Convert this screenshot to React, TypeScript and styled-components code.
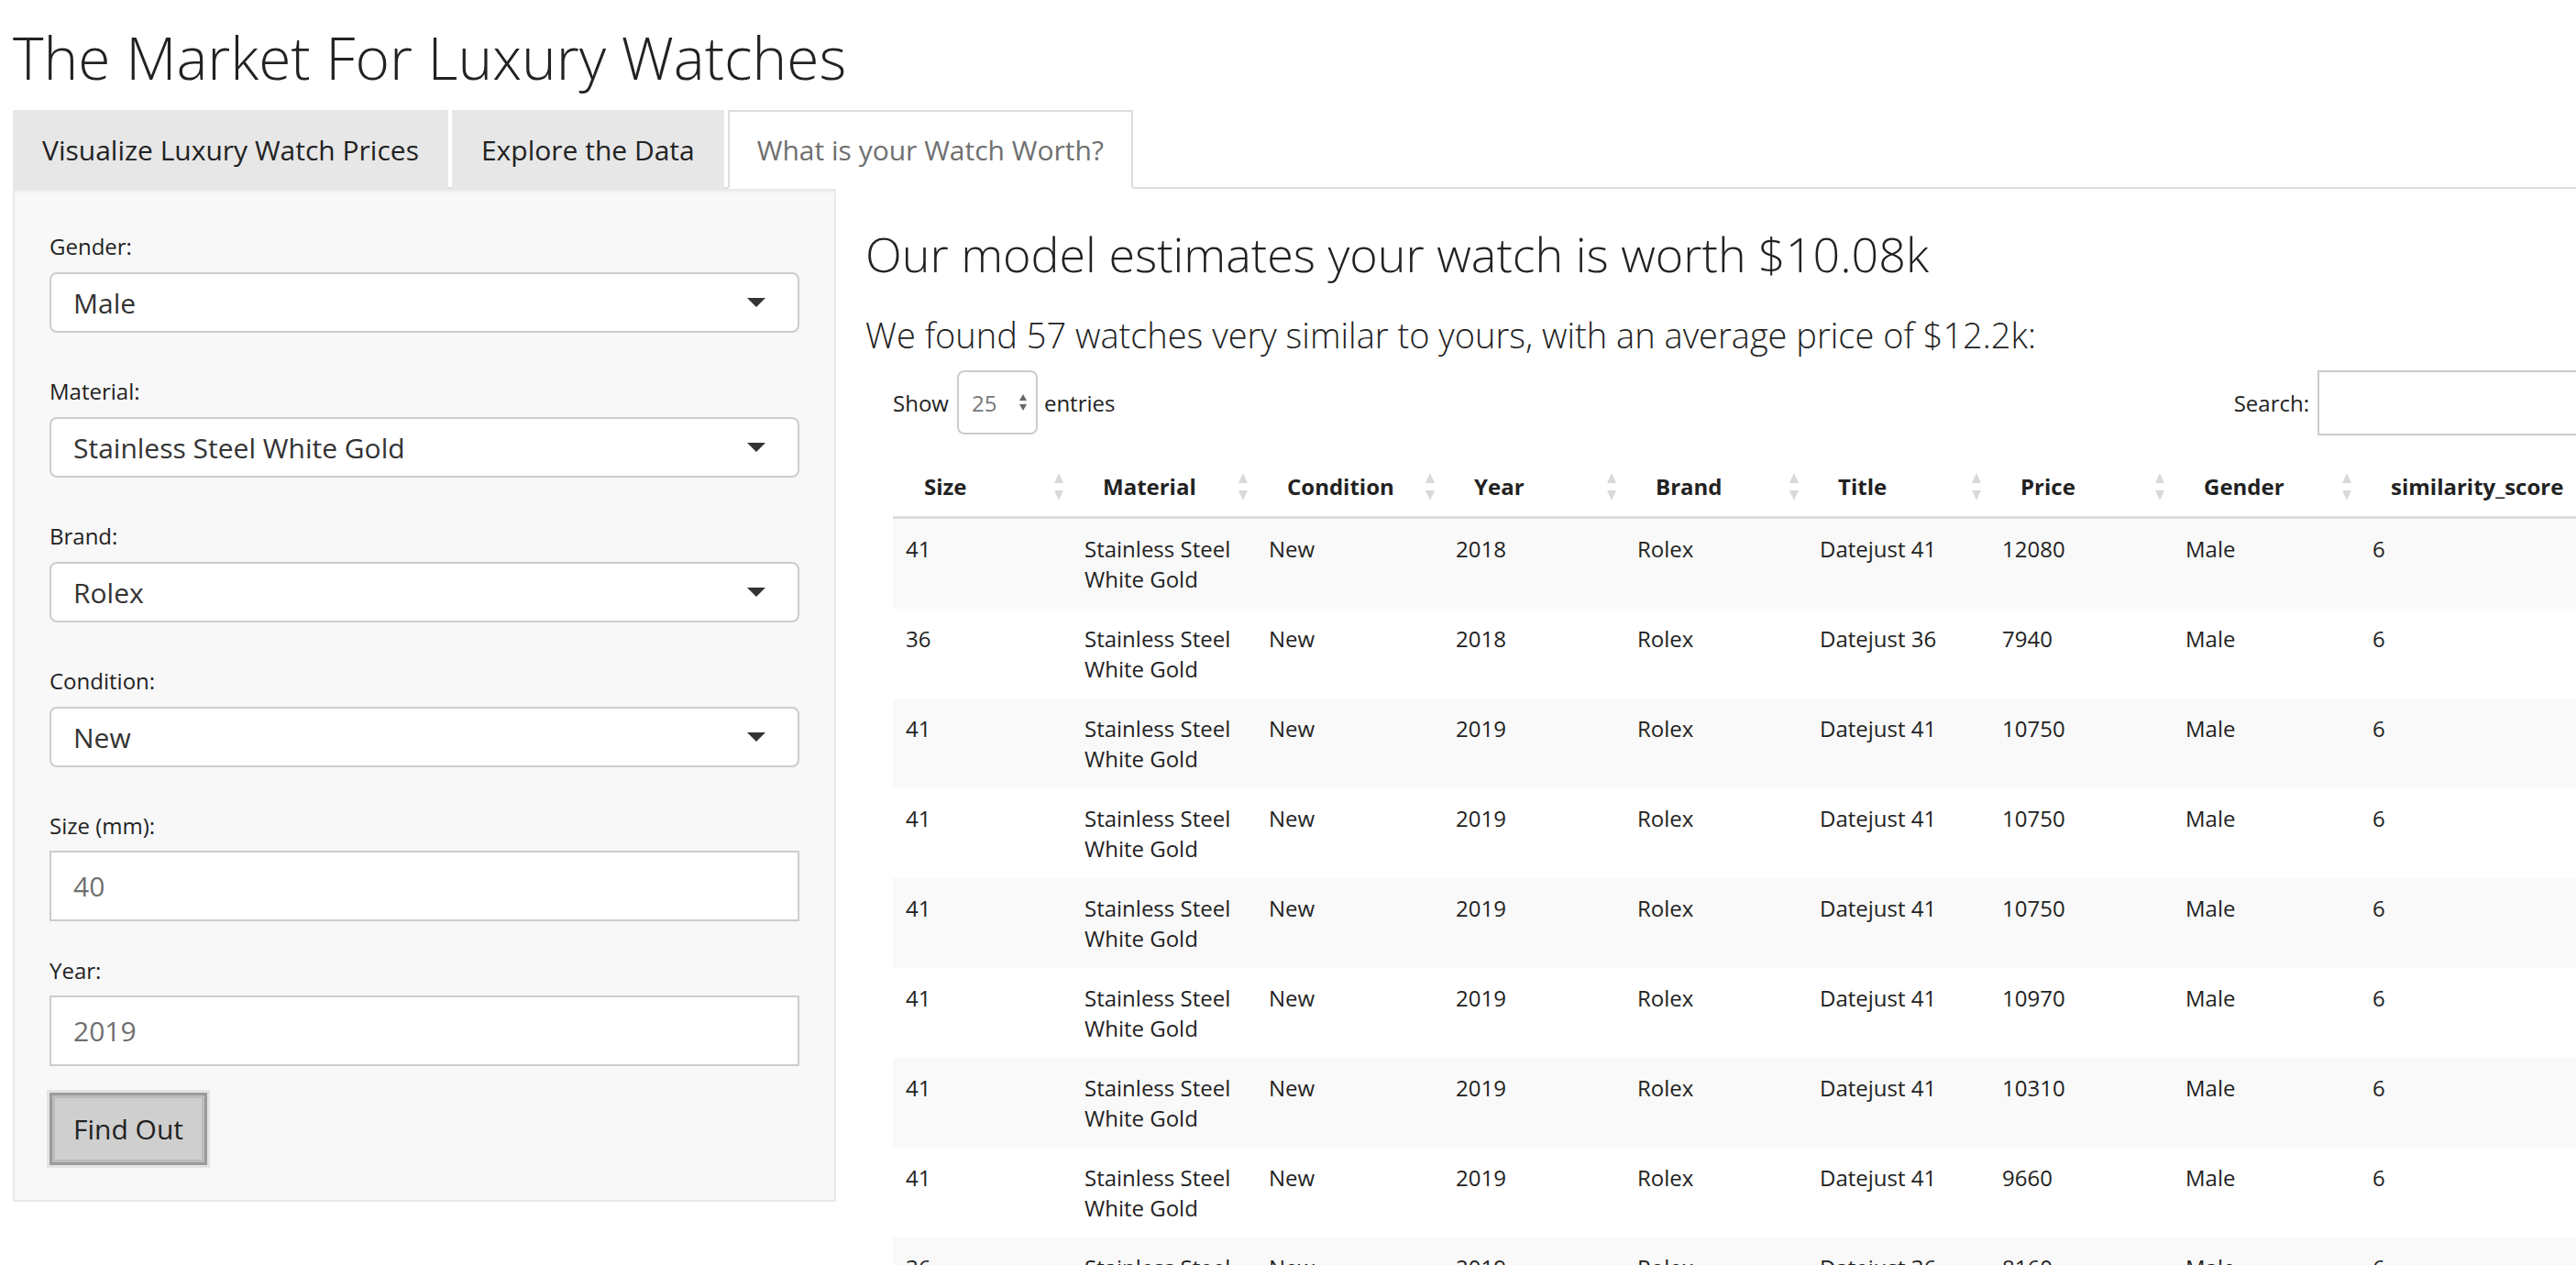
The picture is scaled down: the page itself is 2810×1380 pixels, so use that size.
import React from 'react';
import styled, { createGlobalStyle } from 'styled-components';

const GlobalStyle = createGlobalStyle`
  html, body { margin: 0; padding: 0; background: #fff; overflow: hidden; }
  body { font-family: "Open Sans", "Liberation Sans", sans-serif; color: #222; }
  *, *::before, *::after { box-sizing: border-box; }
`;

const Page = styled.div`
  padding-left: 14px;
  width: 2920px;
`;

const Title = styled.h2`
  margin: 28px 0 0;
  font-size: 64px;
  font-weight: 300;
  line-height: 70px;
  color: #222;
`;

const TabList = styled.ul`
  display: flex;
  gap: 4px;
  margin: 22px 0 0;
  padding: 0;
  list-style: none;
  border-bottom: 2px solid #ddd;
`;

const Tab = styled.li<{ $active?: boolean }>`
  margin-bottom: -2px;
  height: 86px;
  padding: 0 30px;
  display: flex;
  align-items: center;
  font-size: 30px;
  background: ${(p) => (p.$active ? '#fff' : '#e7e7e7')};
  color: ${(p) => (p.$active ? '#6f6f6f' : '#222')};
  border: 2px solid ${(p) => (p.$active ? '#ddd' : '#e7e7e7')};
  border-bottom-color: ${(p) => (p.$active ? '#fff' : '#e7e7e7')};
`;

const TabContent = styled.div`
  display: flex;
  align-items: flex-start;
`;

const Sidebar = styled.form`
  flex: none;
  width: 898px;
  background: #f8f8f8;
  border: 2px solid #e9e9e9;
  box-shadow: inset 0 2px 2px rgba(0, 0, 0, 0.04);
  padding: 44px 38px 38px;
`;

const FormGroup = styled.div<{ $gap: number }>`
  margin-bottom: ${(p) => p.$gap}px;
`;

const Label = styled.label`
  display: block;
  font-size: 24px;
  line-height: 34px;
  color: #222;
`;

const SelectBox = styled.div`
  margin-top: 11px;
  height: 66px;
  background: #fff;
  border: 2px solid #ccc;
  border-radius: 8px;
  display: flex;
  align-items: center;
  padding: 0 35px 0 24px;
  font-size: 30px;
  color: #333;
`;

const Caret = styled.span`
  margin-left: auto;
  width: 0;
  height: 0;
  border-left: 10px solid transparent;
  border-right: 10px solid transparent;
  border-top: 10px solid #333;
`;

const TextInput = styled.div`
  margin-top: 10px;
  height: 77px;
  background: #fff;
  border: 2px solid #ccc;
  display: flex;
  align-items: center;
  padding: 0 24px;
  font-size: 30px;
  color: #6f6f6f;
`;

const Button = styled.button`
  margin-top: 29px;
  height: 79px;
  padding: 0 23px;
  font-family: inherit;
  font-size: 30px;
  color: #222;
  background: #cfcfcf;
  border: 3px solid #9b9b9b;
  box-shadow: 0 0 0 3px #e4e4e4, inset 0 0 0 3px #bcbcbc;
`;

const Main = styled.div`
  flex: none;
  margin-left: 32px;
`;

const Estimate = styled.h3`
  margin: 42px 0 0;
  font-size: 52px;
  line-height: 57px;
  font-weight: 300;
  color: #222;
`;

const Similar = styled.h4`
  margin: 39px 0 0;
  font-size: 38px;
  line-height: 42px;
  font-weight: 300;
  color: #222;
`;

const TableWrap = styled.div`
  margin-left: 30px;
  width: 1885px;
`;

const Controls = styled.div`
  margin-top: 18px;
  height: 70px;
  display: flex;
  align-items: center;
  justify-content: space-between;
  font-size: 24px;
`;

const ControlGroup = styled.div`
  display: flex;
  align-items: center;
`;

const LengthSelect = styled.div`
  width: 88px;
  height: 70px;
  margin: 0 7px 0 9px;
  border: 2px solid #ccc;
  border-radius: 8px;
  display: flex;
  align-items: center;
  justify-content: space-between;
  padding: 0 10px 0 14px;
  color: #777;
  font-size: 24px;
`;

const SearchInput = styled.div`
  width: 331px;
  height: 71px;
  margin-left: 9px;
  border: 2px solid #ccc;
  background: #fff;
`;

const Table = styled.table`
  margin-top: 21px;
  width: 1885px;
  table-layout: fixed;
  border-collapse: collapse;
  font-size: 24px;
`;

const Th = styled.th`
  padding: 19px 9px 15px 34px;
  line-height: 34px;
  font-weight: 700;
  text-align: left;
  color: #222;
  border-bottom: 3px solid #ddd;
  white-space: nowrap;
`;

const HeadInner = styled.div`
  display: flex;
  align-items: center;
  justify-content: space-between;
`;

const Row = styled.tr<{ $odd: boolean }>`
  background: ${(p) => (p.$odd ? '#f9f9f9' : '#fff')};
  & + & td {
    border-top: 2px solid #ddd;
  }
`;

const Td = styled.td`
  padding: 16px 14px;
  line-height: 33px;
  vertical-align: top;
  color: #222;
`;

const SortIcon = () => (
  <svg width="10" height="30" viewBox="0 0 10 30" style={{ flex: 'none' }}>
    <polygon points="5,0 10,11 0,11" fill="#d9d9d9" />
    <polygon points="0,19 10,19 5,30" fill="#d9d9d9" />
  </svg>
);

const SpinIcon = () => (
  <svg width="8" height="18" viewBox="0 0 8 18">
    <polygon points="4,0 8,7 0,7" fill="#666" />
    <polygon points="0,11 8,11 4,18" fill="#666" />
  </svg>
);

const columns = [
  { name: 'Size', w: 195 },
  { name: 'Material', w: 201 },
  { name: 'Condition', w: 204 },
  { name: 'Year', w: 198 },
  { name: 'Brand', w: 199 },
  { name: 'Title', w: 199 },
  { name: 'Price', w: 200 },
  { name: 'Gender', w: 204 },
  { name: 'similarity_score', w: 285 },
];

const rows: [string, string, string, string, string][] = [
  ['41', '2018', 'Datejust 41', '12080', '6'],
  ['36', '2018', 'Datejust 36', '7940', '6'],
  ['41', '2019', 'Datejust 41', '10750', '6'],
  ['41', '2019', 'Datejust 41', '10750', '6'],
  ['41', '2019', 'Datejust 41', '10750', '6'],
  ['41', '2019', 'Datejust 41', '10970', '6'],
  ['41', '2019', 'Datejust 41', '10310', '6'],
  ['41', '2019', 'Datejust 41', '9660', '6'],
  ['36', '2019', 'Datejust 36', '8160', '6'],
];

const selects = [
  { label: 'Gender:', value: 'Male' },
  { label: 'Material:', value: 'Stainless Steel White Gold' },
  { label: 'Brand:', value: 'Rolex' },
  { label: 'Condition:', value: 'New' },
];

export default function App() {
  return (
    <>
      <GlobalStyle />
      <Page>
        <Title>The Market For Luxury Watches</Title>
        <TabList>
          <Tab>Visualize Luxury Watch Prices</Tab>
          <Tab>Explore the Data</Tab>
          <Tab $active>What is your Watch Worth?</Tab>
        </TabList>
        <TabContent>
          <Sidebar>
            {selects.map((s) => (
              <FormGroup key={s.label} $gap={47}>
                <Label>{s.label}</Label>
                <SelectBox>
                  {s.value}
                  <Caret />
                </SelectBox>
              </FormGroup>
            ))}
            <FormGroup $gap={37}>
              <Label>Size (mm):</Label>
              <TextInput>40</TextInput>
            </FormGroup>
            <FormGroup $gap={0}>
              <Label>Year:</Label>
              <TextInput>2019</TextInput>
            </FormGroup>
            <Button type="button">Find Out</Button>
          </Sidebar>
          <Main>
            <Estimate>Our model estimates your watch is worth $10.08k</Estimate>
            <Similar>We found 57 watches very similar to yours, with an average price of $12.2k:</Similar>
            <TableWrap>
              <Controls>
                <ControlGroup>
                  Show
                  <LengthSelect>
                    25
                    <SpinIcon />
                  </LengthSelect>
                  entries
                </ControlGroup>
                <ControlGroup>
                  Search:
                  <SearchInput />
                </ControlGroup>
              </Controls>
              <Table>
                <colgroup>
                  {columns.map((c) => (
                    <col key={c.name} style={{ width: c.w }} />
                  ))}
                </colgroup>
                <thead>
                  <tr>
                    {columns.map((c) => (
                      <Th key={c.name}>
                        <HeadInner>
                          {c.name}
                          <SortIcon />
                        </HeadInner>
                      </Th>
                    ))}
                  </tr>
                </thead>
                <tbody>
                  {rows.map((r, i) => (
                    <Row key={i} $odd={i % 2 === 0}>
                      <Td>{r[0]}</Td>
                      <Td>Stainless Steel White Gold</Td>
                      <Td>New</Td>
                      <Td>{r[1]}</Td>
                      <Td>Rolex</Td>
                      <Td>{r[2]}</Td>
                      <Td>{r[3]}</Td>
                      <Td>Male</Td>
                      <Td>{r[4]}</Td>
                    </Row>
                  ))}
                </tbody>
              </Table>
            </TableWrap>
          </Main>
        </TabContent>
      </Page>
    </>
  );
}
